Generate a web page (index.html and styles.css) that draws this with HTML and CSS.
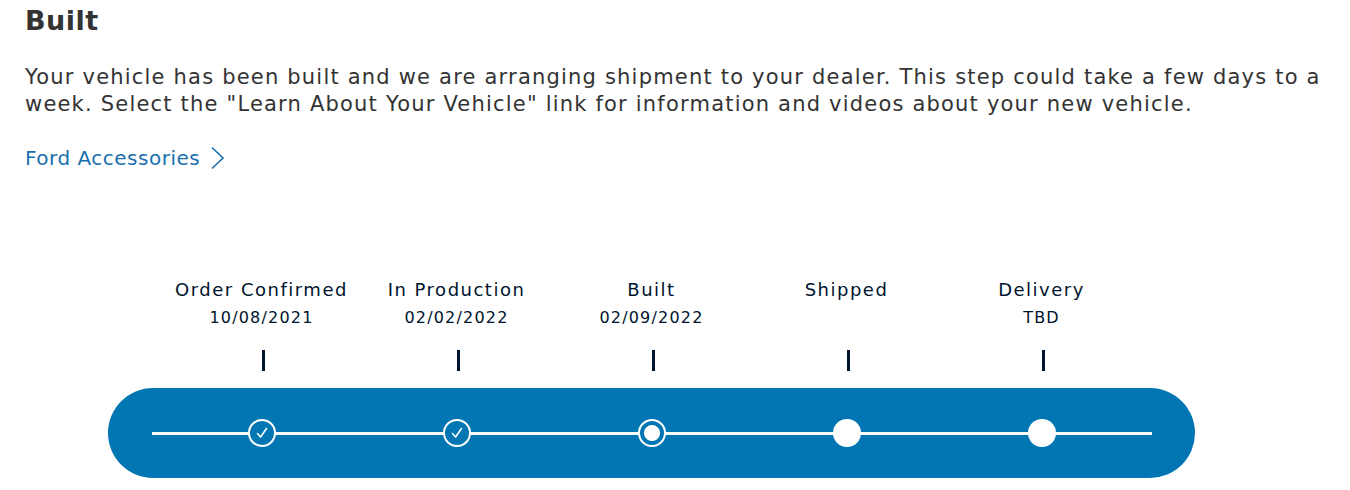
FILE: index.html
```html
<!DOCTYPE html>
<html lang="en">
<head>
<meta charset="utf-8">
<title>Order Status</title>
<link rel="stylesheet" href="styles.css">
</head>
<body>
<main class="page">
  <h1 class="status-title">Built</h1>
  <p class="status-text">Your vehicle has been built and we are arranging shipment to your dealer. This step could take a few days to a week. Select the "Learn About Your Vehicle" link for information and videos about your new vehicle.</p>
  <a class="status-link" href="#">Ford Accessories
    <svg class="chevron" width="16" height="24" viewBox="0 0 16 24" aria-hidden="true"><path d="M2 1.5 L13 12 L2 22.5" fill="none" stroke="currentColor" stroke-width="1.6"/></svg>
  </a>

  <section class="tracker">
    <div class="steps">
      <div class="step"><span class="step-name">Order Confirmed</span><span class="step-date">10/08/2021</span><span class="tick"></span></div>
      <div class="step"><span class="step-name">In Production</span><span class="step-date">02/02/2022</span><span class="tick"></span></div>
      <div class="step"><span class="step-name">Built</span><span class="step-date">02/09/2022</span><span class="tick"></span></div>
      <div class="step"><span class="step-name">Shipped</span><span class="step-date"></span><span class="tick"></span></div>
      <div class="step"><span class="step-name">Delivery</span><span class="step-date">TBD</span><span class="tick"></span></div>
    </div>
    <div class="bar">
      <div class="rail">
        <div class="nodes">
          <span class="node done"><svg viewBox="0 0 24 24" width="24" height="24"><path d="M7.5 12.5 L10.6 16 L16.5 7.5" fill="none" stroke="#fff" stroke-width="1.6" stroke-linecap="round" stroke-linejoin="round"/></svg></span>
          <span class="node done"><svg viewBox="0 0 24 24" width="24" height="24"><path d="M7.5 12.5 L10.6 16 L16.5 7.5" fill="none" stroke="#fff" stroke-width="1.6" stroke-linecap="round" stroke-linejoin="round"/></svg></span>
          <span class="node current"></span>
          <span class="node upcoming"></span>
          <span class="node upcoming"></span>
        </div>
      </div>
    </div>
  </section>
</main>
</body>
</html>
```

FILE: styles.css
```css
* { box-sizing: border-box; }

body {
  margin: 0;
  background: #fff;
  font-family: "DejaVu Sans", "Noto Sans", sans-serif;
  color: #333;
}

.page {
  padding: 0 0 0 25px;
}

.status-title {
  margin: 0;
  padding-top: 1px;
  font-size: 27px;
  line-height: 40px;
  font-weight: 700;
  letter-spacing: 0.5px;
  color: #333;
}

.status-text {
  margin: 23px 0 0;
  font-size: 21px;
  line-height: 27px;
  letter-spacing: 1.2px;
  color: #333;
}

.status-link {
  display: inline-flex;
  align-items: center;
  gap: 10px;
  margin-top: 26px;
  font-size: 20px;
  line-height: 28px;
  letter-spacing: 0.5px;
  color: #1b6fae;
  text-decoration: none;
}

.chevron { display: block; }

/* progress tracker */
.tracker {
  width: 1087px;
  margin: 104px 0 0 83px;
}

.steps {
  display: grid;
  grid-template-columns: repeat(5, 195px);
  justify-content: center;
}

.step {
  display: flex;
  flex-direction: column;
  align-items: center;
  color: #00142e;
}

.step-name {
  font-size: 18px;
  line-height: 27px;
  letter-spacing: 1.5px;
}

.step-date {
  height: 29px;
  font-size: 16px;
  line-height: 29px;
  letter-spacing: 1.2px;
}

.tick {
  width: 3px;
  height: 21px;
  margin: 18px 0 17px 4px;
  background: #00142e;
}

.bar {
  height: 90px;
  border-radius: 45px;
  background: #0276b3;
  display: flex;
  align-items: center;
  justify-content: center;
}

.rail {
  width: 1000px;
  height: 28px;
  border-radius: 2px;
  background: linear-gradient(to bottom, transparent 12.5px, #fff 12.5px, #fff 15.5px, transparent 15.5px);
}

.nodes {
  display: grid;
  grid-template-columns: repeat(5, 195px);
  justify-content: center;
  justify-items: center;
}

.node {
  display: flex;
  align-items: center;
  justify-content: center;
  width: 28px;
  height: 28px;
  border-radius: 50%;
}

.node.done {
  border: 2px solid #fff;
  background: #0276b3;
}

.node.current {
  border: 2px solid #fff;
  background: radial-gradient(circle, #fff 7.5px, #0276b3 8.5px);
}

.node.upcoming {
  background: #fff;
}
```
